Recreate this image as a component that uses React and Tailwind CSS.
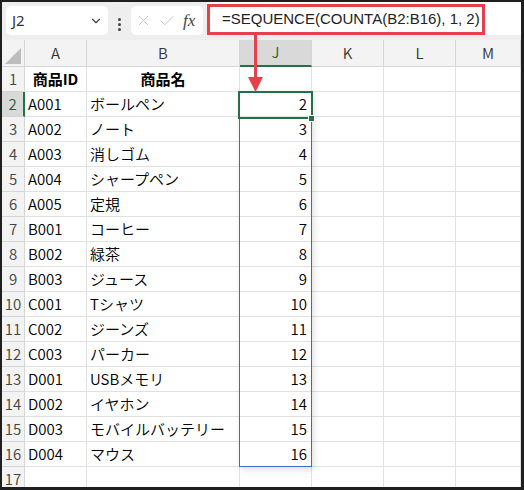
import { ChevronDown, X, Check } from 'lucide-react'

const rows = [
  ['A001', 'ボールペン'],
  ['A002', 'ノート'],
  ['A003', '消しゴム'],
  ['A004', 'シャープペン'],
  ['A005', '定規'],
  ['B001', 'コーヒー'],
  ['B002', '緑茶'],
  ['B003', 'ジュース'],
  ['C001', 'Tシャツ'],
  ['C002', 'ジーンズ'],
  ['C003', 'パーカー'],
  ['D001', 'USBメモリ'],
  ['D002', 'イヤホン'],
  ['D003', 'モバイルバッテリー'],
  ['D004', 'マウス'],
]

const cols = 'grid grid-cols-[23px_62px_153px_72px_72px_72px_1fr]'
const cell = 'border-r border-b border-[#e1e1e1] flex items-center overflow-hidden whitespace-nowrap'
const rowHead =
  'border-r border-b border-[#d6d6d6] bg-[#f3f3f3] flex items-center justify-center text-[15px] text-[#444]'
const colHead =
  'border-r border-b border-[#d6d6d6] bg-[#f3f3f3] flex items-center justify-center text-[15px] text-[#333]'

function Toolbar() {
  return (
    <div className="flex h-[38px] shrink-0 items-start bg-[#eeeeee]">
      <div className="ml-[4px] mt-[4px] flex h-[29px] w-[102px] items-center justify-between rounded-[5px] bg-white pl-[6px] pr-[5px] text-[15px] text-[#333]">
        <span>J2</span>
        <ChevronDown className="h-[14px] w-[14px] text-[#444]" strokeWidth={2} />
      </div>
      <div className="mx-[10px] mt-[16px] flex flex-col gap-[2px]">
        <span className="h-[3px] w-[3px] rounded-full bg-[#444]" />
        <span className="h-[3px] w-[3px] rounded-full bg-[#444]" />
        <span className="h-[3px] w-[3px] rounded-full bg-[#444]" />
      </div>
      <div className="mt-[4px] flex h-[29px] w-[72px] items-center rounded-[5px] bg-white pl-[4px]">
        <X className="h-[17px] w-[17px] text-[#c4c4c4]" strokeWidth={1.3} />
        <Check className="ml-[6px] h-[18px] w-[18px] text-[#c4c4c4]" strokeWidth={1.3} />
        <span className="ml-[7px] font-['Liberation_Serif',serif] text-[17px] italic text-[#444]">
          fx
        </span>
      </div>
      <div className="ml-[4px] flex h-[33px] flex-1 items-start bg-white">
        <div className="mt-[2px] flex h-[31px] w-[278px] items-center border-[3px] border-[#e8404a] pl-[12px] font-['Liberation_Sans',sans-serif] text-[15px] text-[#222]">
          =SEQUENCE(COUNTA(B2:B16), 1, 2)
        </div>
      </div>
    </div>
  )
}

function Grid() {
  const letters = ['A', 'B', 'J', 'K', 'L', 'M']
  return (
    <div className="shrink-0 font-['Noto_Sans_CJK_JP',sans-serif] font-[350]">
      <div className={`${cols} h-[27px]`}>
        <div className="relative border-r border-b border-[#d6d6d6] bg-[#f3f3f3]">
          <svg className="absolute bottom-[2px] right-[3px]" width="16" height="16" viewBox="0 0 16 16">
            <polygon points="0,16 16,16 16,0" fill="#bdbdbd" />
          </svg>
        </div>
        {letters.map((l) =>
          l === 'J' ? (
            <div
              key={l}
              className="flex items-center justify-center border-r border-b-2 border-r-[#d6d6d6] border-b-[#217346] bg-[#d9d9d9] text-[15px] text-[#1b5e35]"
            >
              {l}
            </div>
          ) : (
            <div key={l} className={colHead}>
              {l}
            </div>
          ),
        )}
      </div>

      <div className={`${cols} h-[25px]`}>
        <div className={rowHead}>1</div>
        <div className={`${cell} justify-center text-[15px] font-bold text-black`}>商品ID</div>
        <div className={`${cell} justify-center text-[15px] font-bold text-black`}>商品名</div>
        <div className={cell} />
        <div className={cell} />
        <div className={cell} />
        <div className={cell} />
      </div>

      {rows.map(([id, name], i) => (
        <div key={id} className={`${cols} h-[25px]`}>
          {i === 0 ? (
            <div className="flex items-center justify-center border-r-2 border-b border-r-[#217346] border-b-[#d6d6d6] bg-[#d9d9d9] text-[15px] text-[#1b5e35]">
              {i + 2}
            </div>
          ) : (
            <div className={rowHead}>{i + 2}</div>
          )}
          <div className={`${cell} pl-[3px] text-[15px] text-black`}>{id}</div>
          <div className={`${cell} pl-[3px] text-[15px] text-black`}>{name}</div>
          <div className={`${cell} justify-end pr-[4px] text-[15px] text-black`}>{i + 2}</div>
          <div className={cell} />
          <div className={cell} />
          <div className={cell} />
        </div>
      ))}

      <div className={`${cols} h-[25px]`}>
        <div className={rowHead}>17</div>
        <div className={cell} />
        <div className={cell} />
        <div className={cell} />
        <div className={cell} />
        <div className={cell} />
        <div className={cell} />
      </div>
    </div>
  )
}

export default function App() {
  return (
    <div className="h-[490px] w-[524px] overflow-hidden bg-[#1f1f1f] pb-[3px] pl-[2px] pr-[3px] pt-[2px]">
      <div className="relative flex h-full flex-col overflow-hidden bg-white">
        <Toolbar />
        <Grid />

        {/* spill range outline */}
        <div className="pointer-events-none absolute left-[237px] top-[89px] h-[376px] w-[73px] border border-[#3b6cc4] shadow-[2px_3px_6px_rgba(0,0,0,0.12)]" />
        {/* active cell */}
        <div className="pointer-events-none absolute left-[236px] top-[89px] h-[28px] w-[75px] border-2 border-[#217346]" />
        <div className="absolute left-[306px] top-[113px] h-[7px] w-[7px] border border-white bg-[#217346]" />

        {/* red arrow */}
        <div className="absolute left-[252px] top-[33px] h-[44px] w-[3px] bg-[#e8404a]" />
        <svg className="absolute left-[246px] top-[75px]" width="15" height="15" viewBox="0 0 15 15">
          <polygon points="0,0 15,0 7.5,15" fill="#e8404a" />
        </svg>
      </div>
    </div>
  )
}
